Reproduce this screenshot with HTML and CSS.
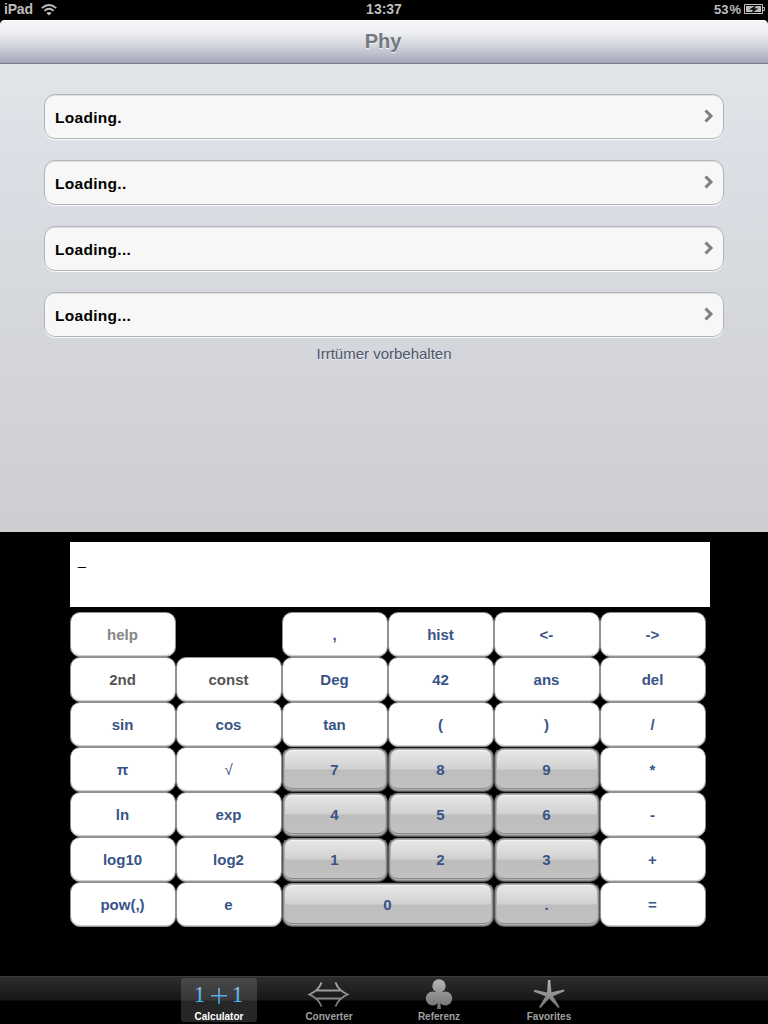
FILE: index.html
```
<!DOCTYPE html>
<html lang="en">
<head>
<meta charset="utf-8">
<title>Phy</title>
<link rel="stylesheet" href="styles.css">
</head>
<body>
<div class="screen">
  <div class="status">
    <div class="carrier">iPad
      <svg class="wifi" width="16" height="12" viewBox="0 0 16 12" fill="none" stroke="#bdbdbd" stroke-width="1.9"><path d="M.8 4.1Q8-2 15.2 4.1M3.4 6.9Q8 2.8 12.6 6.9"/><path d="M5.4 9Q8 6.8 10.6 9L8 11.5Z" fill="#bdbdbd" stroke="none"/></svg>
    </div>
    <div class="clock">13:37</div>
    <div class="power"><span>53</span><span>%</span>
      <svg width="21" height="11" viewBox="0 0 21 11"><path d="M.5.5h18v9H.5z" fill="none" stroke="#c4c4c4"/><path d="M2 2h15v6H2z" fill="#bdbdbd"/><path d="M19 3.5h1.500v3H19" fill="none" stroke="#bdbdbd"/><path d="M12.500 1L5 5.600l4 .3L7 9.500l7.500-5-4-.3z" fill="#111"/></svg>
    </div>
  </div>
  <div class="main">
    <header class="navbar"><h1>Phy</h1></header>
    <div class="list">
      <div class="row"><span>Loading.</span><svg class="chevron" width="10" height="14" viewBox="0 0 10 14"><path d="M1.500 1.500L7 7l-5.500 5.500" fill="none" stroke="#7f7f7f" stroke-width="3"/></svg></div>
      <div class="row"><span>Loading..</span><svg class="chevron" width="10" height="14" viewBox="0 0 10 14"><path d="M1.500 1.500L7 7l-5.500 5.500" fill="none" stroke="#7f7f7f" stroke-width="3"/></svg></div>
      <div class="row"><span>Loading...</span><svg class="chevron" width="10" height="14" viewBox="0 0 10 14"><path d="M1.500 1.500L7 7l-5.500 5.500" fill="none" stroke="#7f7f7f" stroke-width="3"/></svg></div>
      <div class="row"><span>Loading...</span><svg class="chevron" width="10" height="14" viewBox="0 0 10 14"><path d="M1.500 1.500L7 7l-5.500 5.500" fill="none" stroke="#7f7f7f" stroke-width="3"/></svg></div>
    </div>
    <p class="footnote">Irrtümer vorbehalten</p>
  </div>
  <div class="calculator">
    <div class="display">_</div>
    <div class="keys">
      <button class="key help">help</button><span></span><button class="key">,</button><button class="key">hist</button><button class="key">&lt;-</button><button class="key">-&gt;</button>
      <button class="key mode">2nd</button><button class="key mode">const</button><button class="key">Deg</button><button class="key">42</button><button class="key">ans</button><button class="key">del</button>
      <button class="key">sin</button><button class="key">cos</button><button class="key">tan</button><button class="key">(</button><button class="key">)</button><button class="key">/</button>
      <button class="key">π</button><button class="key root">√</button><button class="key num">7</button><button class="key num">8</button><button class="key num">9</button><button class="key">*</button>
      <button class="key">ln</button><button class="key">exp</button><button class="key num">4</button><button class="key num">5</button><button class="key num">6</button><button class="key">-</button>
      <button class="key">log10</button><button class="key">log2</button><button class="key num">1</button><button class="key num">2</button><button class="key num">3</button><button class="key">+</button>
      <button class="key">pow(,)</button><button class="key">e</button><button class="key num wide">0</button><button class="key num">.</button><button class="key">=</button>
    </div>
  </div>
  <nav class="tabs">
    <a class="tab active">
      <svg width="60" height="30" viewBox="0 0 60 30">
        <defs><linearGradient id="blue" x1="0" y1="6" x2="0" y2="24" gradientUnits="userSpaceOnUse"><stop offset="0" stop-color="#b5d8f4"/><stop offset=".5" stop-color="#61a9e3"/><stop offset="1" stop-color="#38bdf5"/></linearGradient></defs>
        <g class="sum" fill="url(#blue)"><text x="4.500" y="24">1</text><text x="42.500" y="24">1</text></g><path d="M22 17h16v1.500H22zM29.300 10h1.500v16h-1.500z" fill="url(#blue)"/>
      </svg>
      <span>Calculator</span>
    </a>
    <a class="tab">
      <svg width="60" height="30" viewBox="0 0 60 30">
        <defs><linearGradient id="silver" x1="0" y1="2" x2="0" y2="30" gradientUnits="userSpaceOnUse"><stop offset="0" stop-color="#b4b4b4"/><stop offset="1" stop-color="#707070"/></linearGradient></defs>
        <path d="M22.500 4.500C20.500 10 16 14 10.500 16.500C16 19 20.500 23 22.500 28.500M36.500 4.500C38.500 10 43 14 48.500 16.500C43 19 38.500 23 36.500 28.500M17.500 12.500h24M17.500 20.500h24" fill="none" stroke="url(#silver)" stroke-width="1.900"/>
      </svg>
      <span>Converter</span>
    </a>
    <a class="tab">
      <svg width="60" height="32" viewBox="0 0 60 32"><g fill="url(#silver)"><circle cx="30" cy="8" r="6.700"/><circle cx="23.700" cy="20.500" r="6.900"/><circle cx="36.300" cy="20.500" r="6.900"/><path d="M27 12h6v10h-2l1 9h-4l1-9h-2z"/></g></svg>
      <span>Referenz</span>
    </a>
    <a class="tab">
      <svg width="60" height="30" viewBox="0 0 60 30"><path d="M29 2h2.200l1.300 12.200L45 11.500l.5 1.800-11.500 5 6.800 10.700-1.600 1L30.200 20.500 21.500 30l-1.600-1 6.700-10.700-11.600-4.500.5-2L28 14.500z" fill="url(#silver)"/></svg>
      <span>Favorites</span>
    </a>
  </nav>
</div>
</body>
</html>
```

FILE: styles.css
```
* { box-sizing: border-box; }
body { margin: 0; background: #000; font-family: "Liberation Sans", Arial, sans-serif; }
.screen { width: 768px; height: 1024px; display: flex; flex-direction: column; overflow: hidden; background: #000; }

.status { height: 20px; display: grid; grid-template-columns: 1fr auto 1fr; padding: 0 3px 0 4px; color: #bdbdbd; font-size: 14px; line-height: 19px; font-weight: bold; }
.carrier { display: flex; align-items: center; gap: 8px; height: 19px; letter-spacing: -.2px; }
.clock { margin-right: 1px; }
.power { display: flex; align-items: center; justify-content: flex-end; height: 19px; font-size: 13px; }
.power span + span { margin: 0 3px 0 1px; }

.main { height: 512px; background: linear-gradient(#e2e6ea 44px, #dcdfe5 130px, #cdced2); border-radius: 5px 5px 0 0; }
.navbar { height: 44px; border-top: 1px solid #fff; border-bottom: 1px solid #777b8d; border-radius: 5px 5px 0 0; background: linear-gradient(#f4f5f7, #eeeff2 28%, #d4d5dc 58%, #a4a7b8); }
.navbar h1 { margin: 0 2px 0 0; color: #717880; font-size: 20px; line-height: 41px; text-align: center; text-shadow: 0 1px 0 #f0f1f4; }
.list { display: flex; flex-direction: column; gap: 21px; padding: 30px 44px 0; }
.row { height: 45px; display: flex; align-items: center; justify-content: space-between; padding: 0 9px 0 10px; border: 1px solid #b0b4ba; border-radius: 11px; background: #f7f7f7; box-shadow: 0 1px 0 #f8f9fb, inset 0 1px 0 #dedfe1; color: #000; font-size: 15.5px; letter-spacing: .3px; font-weight: bold; }
.row span { padding-top: 2px; }
.chevron { margin-bottom: 2px; }
.footnote { margin: 8px 0 0; color: #4c566c; font-size: 15px; line-height: 18px; text-align: center; text-shadow: 0 1px 0 #e8e9ec; }

.calculator { height: 444px; padding: 10px 58px 0 70px; }
.display { height: 65px; padding: 9px 8px; background: #fff; color: #000; font-size: 14px; line-height: 18px; }
.keys { width: 636px; margin-top: 5px; display: grid; grid-template-columns: repeat(6, 106px); grid-auto-rows: 45px; }
.key { margin: 0; padding: 1px 1px 0 0; border: 1px solid #929292; border-radius: 10px; background: #fff; box-shadow: inset 0 -1px 0 #cfcfcf; color: #385487; font: bold 15px/18px "Liberation Sans", Arial, sans-serif; }
.help { color: #858585; }
.mode { color: #555; }
.root { font-weight: normal; }
.num { border-color: #555; border-top-color: #111; background: linear-gradient(#e6e6e6 3px, #d1d1d1 21px, #bdbdbd 22px, #c2c2c2); box-shadow: inset 0 0 0 1px #8a8a8a, inset 0 0 0 2px #b0b0b0, inset 0 -3px 0 #8c8c8c, inset 0 3px 1px #f4f4f4; }
.wide { grid-column: span 2; }

.tabs { height: 48px; display: flex; justify-content: center; gap: 34px; padding: 1px 0 2px; border-top: 1px solid #3c3c3c; background: linear-gradient(#2d2d2d, #171717 23px, #000 24px); }
.tab { width: 76px; display: flex; flex-direction: column; align-items: center; justify-content: space-between; border-radius: 3px; color: #a0a0a0; font-size: 10px; line-height: 11px; font-weight: bold; }
.tab svg { display: block; flex: none; }
.tab span { flex: none; }
.active { color: #fff; background: linear-gradient(#484848, #383838 22px, #262626 23px); }
.sum { font: 24px "Liberation Serif", "Times New Roman", serif; }
```
